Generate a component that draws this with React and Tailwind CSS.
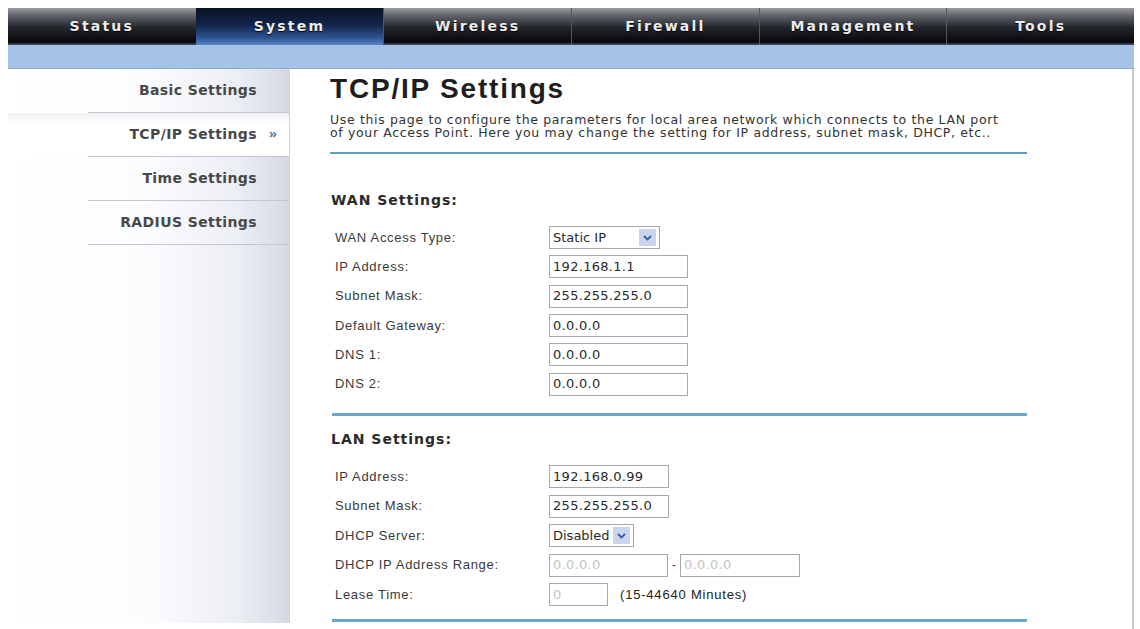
import React from 'react';

const tabs = ['Status', 'System', 'Wireless', 'Firewall', 'Management', 'Tools'];
const sideItems = ['Basic Settings', 'TCP/IP Settings', 'Time Settings', 'RADIUS Settings'];

const TextBox = ({ value, width, disabled }) => (
  <div
    className={`h-[23px] border border-[#a3a9b1] bg-white px-[3px] flex items-center font-['DejaVu_Sans',sans-serif] text-[13px] tracking-[0.3px] ${disabled ? 'text-[#c4c4c4]' : 'text-[#2a2a2a]'}`}
    style={{ width }}
  >
    {value}
  </div>
);

const SelectBox = ({ value, width }) => (
  <div
    className="h-[23px] border border-[#a3a9b1] bg-white pl-[3px] pr-[3px] flex items-center justify-between font-['DejaVu_Sans',sans-serif] text-[13px] tracking-[0px] text-[#2a2a2a]"
    style={{ width }}
  >
    <span>{value}</span>
    <span className="w-[17px] h-[17px] bg-[#c9d6ee] flex items-center justify-center">
      <svg width="9" height="6" viewBox="0 0 9 6">
        <path d="M1 1 L4.5 4.5 L8 1" stroke="#3a5ca6" strokeWidth="1.8" fill="none" />
      </svg>
    </span>
  </div>
);

const Row = ({ label, h, children }) => (
  <div className={`flex items-center pl-[5px] ${h}`}>
    <div className="w-[214px] font-['Liberation_Sans',Arial,sans-serif] text-[13px] tracking-[0.7px] text-[#3a3a3a]">{label}</div>
    <div className="flex items-center">{children}</div>
  </div>
);

const Section = ({ children }) => (
  <h2 className="font-['DejaVu_Sans',Verdana,sans-serif] font-bold text-[14px] leading-[16px] tracking-[1px] text-[#2b2b2b] pl-[1px]">
    {children}
  </h2>
);

export default function App() {
  return (
    <div className="w-[1140px] h-[629px] bg-white overflow-hidden">
      <div className="pt-2 pl-2 pr-[6px] h-full flex flex-col">
        {/* top menu */}
        <div className="grid grid-cols-6 h-[37px] bg-[linear-gradient(to_bottom,#9a9ca1_0%,#5d6066_22%,#23262c_52%,#07080b_92%,#4a5568_100%)]">
          {tabs.map((t, i) => (
            <div
              key={t}
              className={`flex items-center justify-center font-['DejaVu_Sans',Verdana,sans-serif] font-bold text-[14px] tracking-[2.2px] text-[#ececec] [text-shadow:0_1px_1px_#000] ${i > 1 ? 'border-l border-[#54575d]' : ''} ${i === 1 ? 'bg-[linear-gradient(to_bottom,#0a1224_0%,#12244a_45%,#2c5290_80%,#5b85c4_100%)]' : ''}`}
            >
              {t}
            </div>
          ))}
        </div>
        <div className="h-[24px] bg-[#a5c3e6] border-b border-[#8ea9c9]" />

        <div className="flex flex-1">
          {/* sidebar */}
          <aside className="w-[282px] h-[554px] bg-[linear-gradient(to_right,#ffffff_0%,#fbfcfe_50%,#eceef5_82%,#d6d9e4_100%)] border-r border-[#d0d3da]">
            {sideItems.map((s, i) => {
              const active = i === 1;
              return (
                <div key={s} className={`h-[44px] ${active ? 'bg-[linear-gradient(to_bottom,#eff0f3_0%,#ffffff_25%,#ffffff_100%)]' : ''}`}>
                  <div className="ml-[80px] h-full border-b border-[#c3c6ce] flex items-center justify-end">
                    <span className="font-['DejaVu_Sans',Verdana,sans-serif] font-bold text-[14px] tracking-[0.4px] text-[#484848]">{s}</span>
                    <span className="w-[32px] flex justify-center text-[13px] font-bold text-[#6f7d96] pb-[1px]">{active ? '»' : ''}</span>
                  </div>
                </div>
              );
            })}
          </aside>

          {/* content */}
          <main className="flex-1 border-r-2 border-[#c7cacf] pl-[40px] pt-[5px]">
            <h1 className="font-['Liberation_Sans',Arial,sans-serif] font-bold text-[28px] leading-[30px] tracking-[1.8px] text-[#1e1e1e]">
              TCP/IP Settings
            </h1>
            <p className="mt-[9px] w-[697px] pb-[13px] border-b-2 border-[#5c9fbf] font-['DejaVu_Sans',Verdana,sans-serif] text-[12.5px] leading-[13px] tracking-[0.65px] text-[#333]">
              Use this page to configure the parameters for local area network which connects to the LAN port
              <br />
              of your Access Point. Here you may change the setting for IP address, subnet mask, DHCP, etc..
            </p>

            <div className="mt-[38px]">
              <Section>WAN Settings:</Section>
            </div>
            <div className="mt-[15px] w-[697px]">
              <Row label="WAN Access Type:" h="h-[29.3px]"><SelectBox value="Static IP" width={111} /></Row>
              <Row label="IP Address:" h="h-[29.3px]"><TextBox value="192.168.1.1" width={139} /></Row>
              <Row label="Subnet Mask:" h="h-[29.3px]"><TextBox value="255.255.255.0" width={139} /></Row>
              <Row label="Default Gateway:" h="h-[29.3px]"><TextBox value="0.0.0.0" width={139} /></Row>
              <Row label="DNS 1:" h="h-[29.3px]"><TextBox value="0.0.0.0" width={139} /></Row>
              <Row label="DNS 2:" h="h-[29.3px]"><TextBox value="0.0.0.0" width={139} /></Row>
            </div>
            <div className="mt-[14px] ml-[2px] w-[695px] h-[3px] bg-[#6aa8c6]" />

            <div className="mt-[15px]">
              <Section>LAN Settings:</Section>
            </div>
            <div className="mt-[15px] w-[697px]">
              <Row label="IP Address:" h="h-[29.5px]"><TextBox value="192.168.0.99" width={120} /></Row>
              <Row label="Subnet Mask:" h="h-[29.5px]"><TextBox value="255.255.255.0" width={120} /></Row>
              <Row label="DHCP Server:" h="h-[29.5px]"><SelectBox value="Disabled" width={85} /></Row>
              <Row label="DHCP IP Address Range:" h="h-[29.5px]">
                <TextBox value="0.0.0.0" width={119} disabled />
                <span className="px-[4px] font-['Liberation_Sans',Arial,sans-serif] text-[12px] text-[#444]">-</span>
                <TextBox value="0.0.0.0" width={120} disabled />
              </Row>
              <Row label="Lease Time:" h="h-[29.5px]">
                <TextBox value="0" width={59} disabled />
                <span className="ml-[12px] font-['Liberation_Sans',Arial,sans-serif] text-[13px] tracking-[0.8px] text-[#222]">(15-44640 Minutes)</span>
              </Row>
            </div>
            <div className="mt-[10px] ml-[2px] w-[695px] h-[3px] bg-[#6aa8c6]" />
          </main>
        </div>
      </div>
    </div>
  );
}
